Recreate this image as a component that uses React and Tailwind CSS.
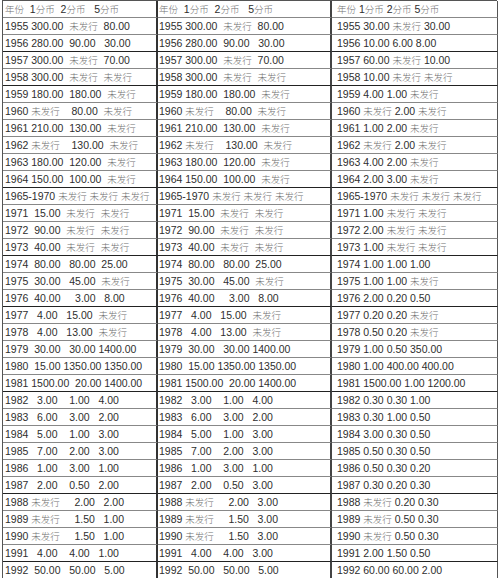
import React from "react";

const col1 = [
  "年份  1分币  2分币   5分币",
  "1955 300.00  未发行  80.00",
  "1956 280.00  90.00   30.00",
  "1957 300.00  未发行  70.00",
  "1958 300.00  未发行  未发行",
  "1959 180.00  180.00  未发行",
  "1960 未发行    80.00  未发行",
  "1961 210.00  130.00  未发行",
  "1962 未发行    130.00  未发行",
  "1963 180.00  120.00  未发行",
  "1964 150.00  100.00  未发行",
  "1965-1970 未发行 未发行 未发行",
  "1971  15.00  未发行  未发行",
  "1972  90.00  未发行  未发行",
  "1973  40.00  未发行  未发行",
  "1974  80.00   80.00  25.00",
  "1975  30.00   45.00  未发行",
  "1976  40.00     3.00   8.00",
  "1977   4.00   15.00  未发行",
  "1978   4.00   13.00  未发行",
  "1979  30.00   30.00 1400.00",
  "1980  15.00 1350.00 1350.00",
  "1981 1500.00  20.00 1400.00",
  "1982   3.00    1.00   4.00",
  "1983   6.00    3.00   2.00",
  "1984   5.00    1.00   3.00",
  "1985   7.00    2.00   3.00",
  "1986   1.00    3.00   1.00",
  "1987   2.00    0.50   2.00",
  "1988 未发行     2.00   2.00",
  "1989 未发行     1.50   1.00",
  "1990 未发行     1.50   1.00",
  "1991   4.00    4.00   1.00",
  "1992  50.00   50.00   5.00",
];

const col2 = col1.map((s, i) => {
  const over = {
    28: "1987   2.00    0.50   3.00",
    29: "1988 未发行     2.00   3.00",
    30: "1989 未发行     1.50   3.00",
    31: "1990 未发行     1.50   3.00",
    32: "1991   4.00    4.00   3.00",
  };
  return over[i] || s;
});

const col3 = [
  "年份 1分币 2分币 5分币",
  "1955 30.00 未发行 30.00",
  "1956 10.00 6.00 8.00",
  "1957 60.00 未发行 10.00",
  "1958 10.00 未发行 未发行",
  "1959 4.00 1.00 未发行",
  "1960 未发行 2.00 未发行",
  "1961 1.00 2.00 未发行",
  "1962 未发行 2.00 未发行",
  "1963 4.00 2.00 未发行",
  "1964 2.00 3.00 未发行",
  "1965-1970 未发行 未发行 未发行",
  "1971 1.00 未发行 未发行",
  "1972 2.00 未发行 未发行",
  "1973 1.00 未发行 未发行",
  "1974 1.00 1.00 1.00",
  "1975 1.00 1.00 未发行",
  "1976 2.00 0.20 0.50",
  "1977 0.20 0.20 未发行",
  "1978 0.50 0.20 未发行",
  "1979 1.00 0.50 350.00",
  "1980 1.00 400.00 400.00",
  "1981 1500.00 1.00 1200.00",
  "1982 0.30 0.30 1.00",
  "1983 0.30 1.00 0.50",
  "1984 3.00 0.30 0.50",
  "1985 0.50 0.30 0.50",
  "1986 0.50 0.30 0.20",
  "1987 0.30 0.20 0.30",
  "1988 未发行 0.20 0.30",
  "1989 未发行 0.50 0.30",
  "1990 未发行 0.50 0.30",
  "1991 2.00 1.50 0.50",
  "1992 60.00 60.00 2.00",
];

const dark = new Set([2, 4, 10, 14, 17, 22, 28, 32]);

function Txt({ s }) {
  const parts = s.split(/(未发行|年份|分币)/);
  return (
    <>
      {parts.map((p, i) =>
        /未发行|年份|分币/.test(p) ? (
          <span key={i} className="text-[#707070] text-[9.5px] font-light font-['Noto_Sans_CJK_SC',sans-serif]">
            {p}
          </span>
        ) : (
          <span key={i}>{p}</span>
        )
      )}
    </>
  );
}

export default function App() {
  return (
    <div className="w-[500px] h-[578px] bg-white overflow-hidden pl-[2px] pr-[3px]">
      <div className="grid grid-cols-[155px_174px_166px] border-t border-l border-[#555] font-['Liberation_Sans',Arial,sans-serif] text-[10.5px] text-[#2e2e2e]">
        {col1.map((_, i) => {
          const b = dark.has(i) ? "border-b-[#222]" : "border-b-[#888]";
          return (
            <React.Fragment key={i}>
              <div className={`h-[17px] leading-[17px] pl-[2px] whitespace-pre overflow-hidden border-b border-r-2 border-r-[#333] ${b}`}>
                <Txt s={col1[i]} />
              </div>
              <div className={`h-[17px] leading-[17px] pl-[1px] whitespace-pre overflow-hidden border-b border-r-2 border-r-[#444] ${b}`}>
                <Txt s={col2[i]} />
              </div>
              <div className={`h-[17px] leading-[17px] pl-[5px] whitespace-pre overflow-hidden border-b border-r border-r-[#555] ${b}`}>
                <Txt s={col3[i]} />
              </div>
            </React.Fragment>
          );
        })}
      </div>
    </div>
  );
}
